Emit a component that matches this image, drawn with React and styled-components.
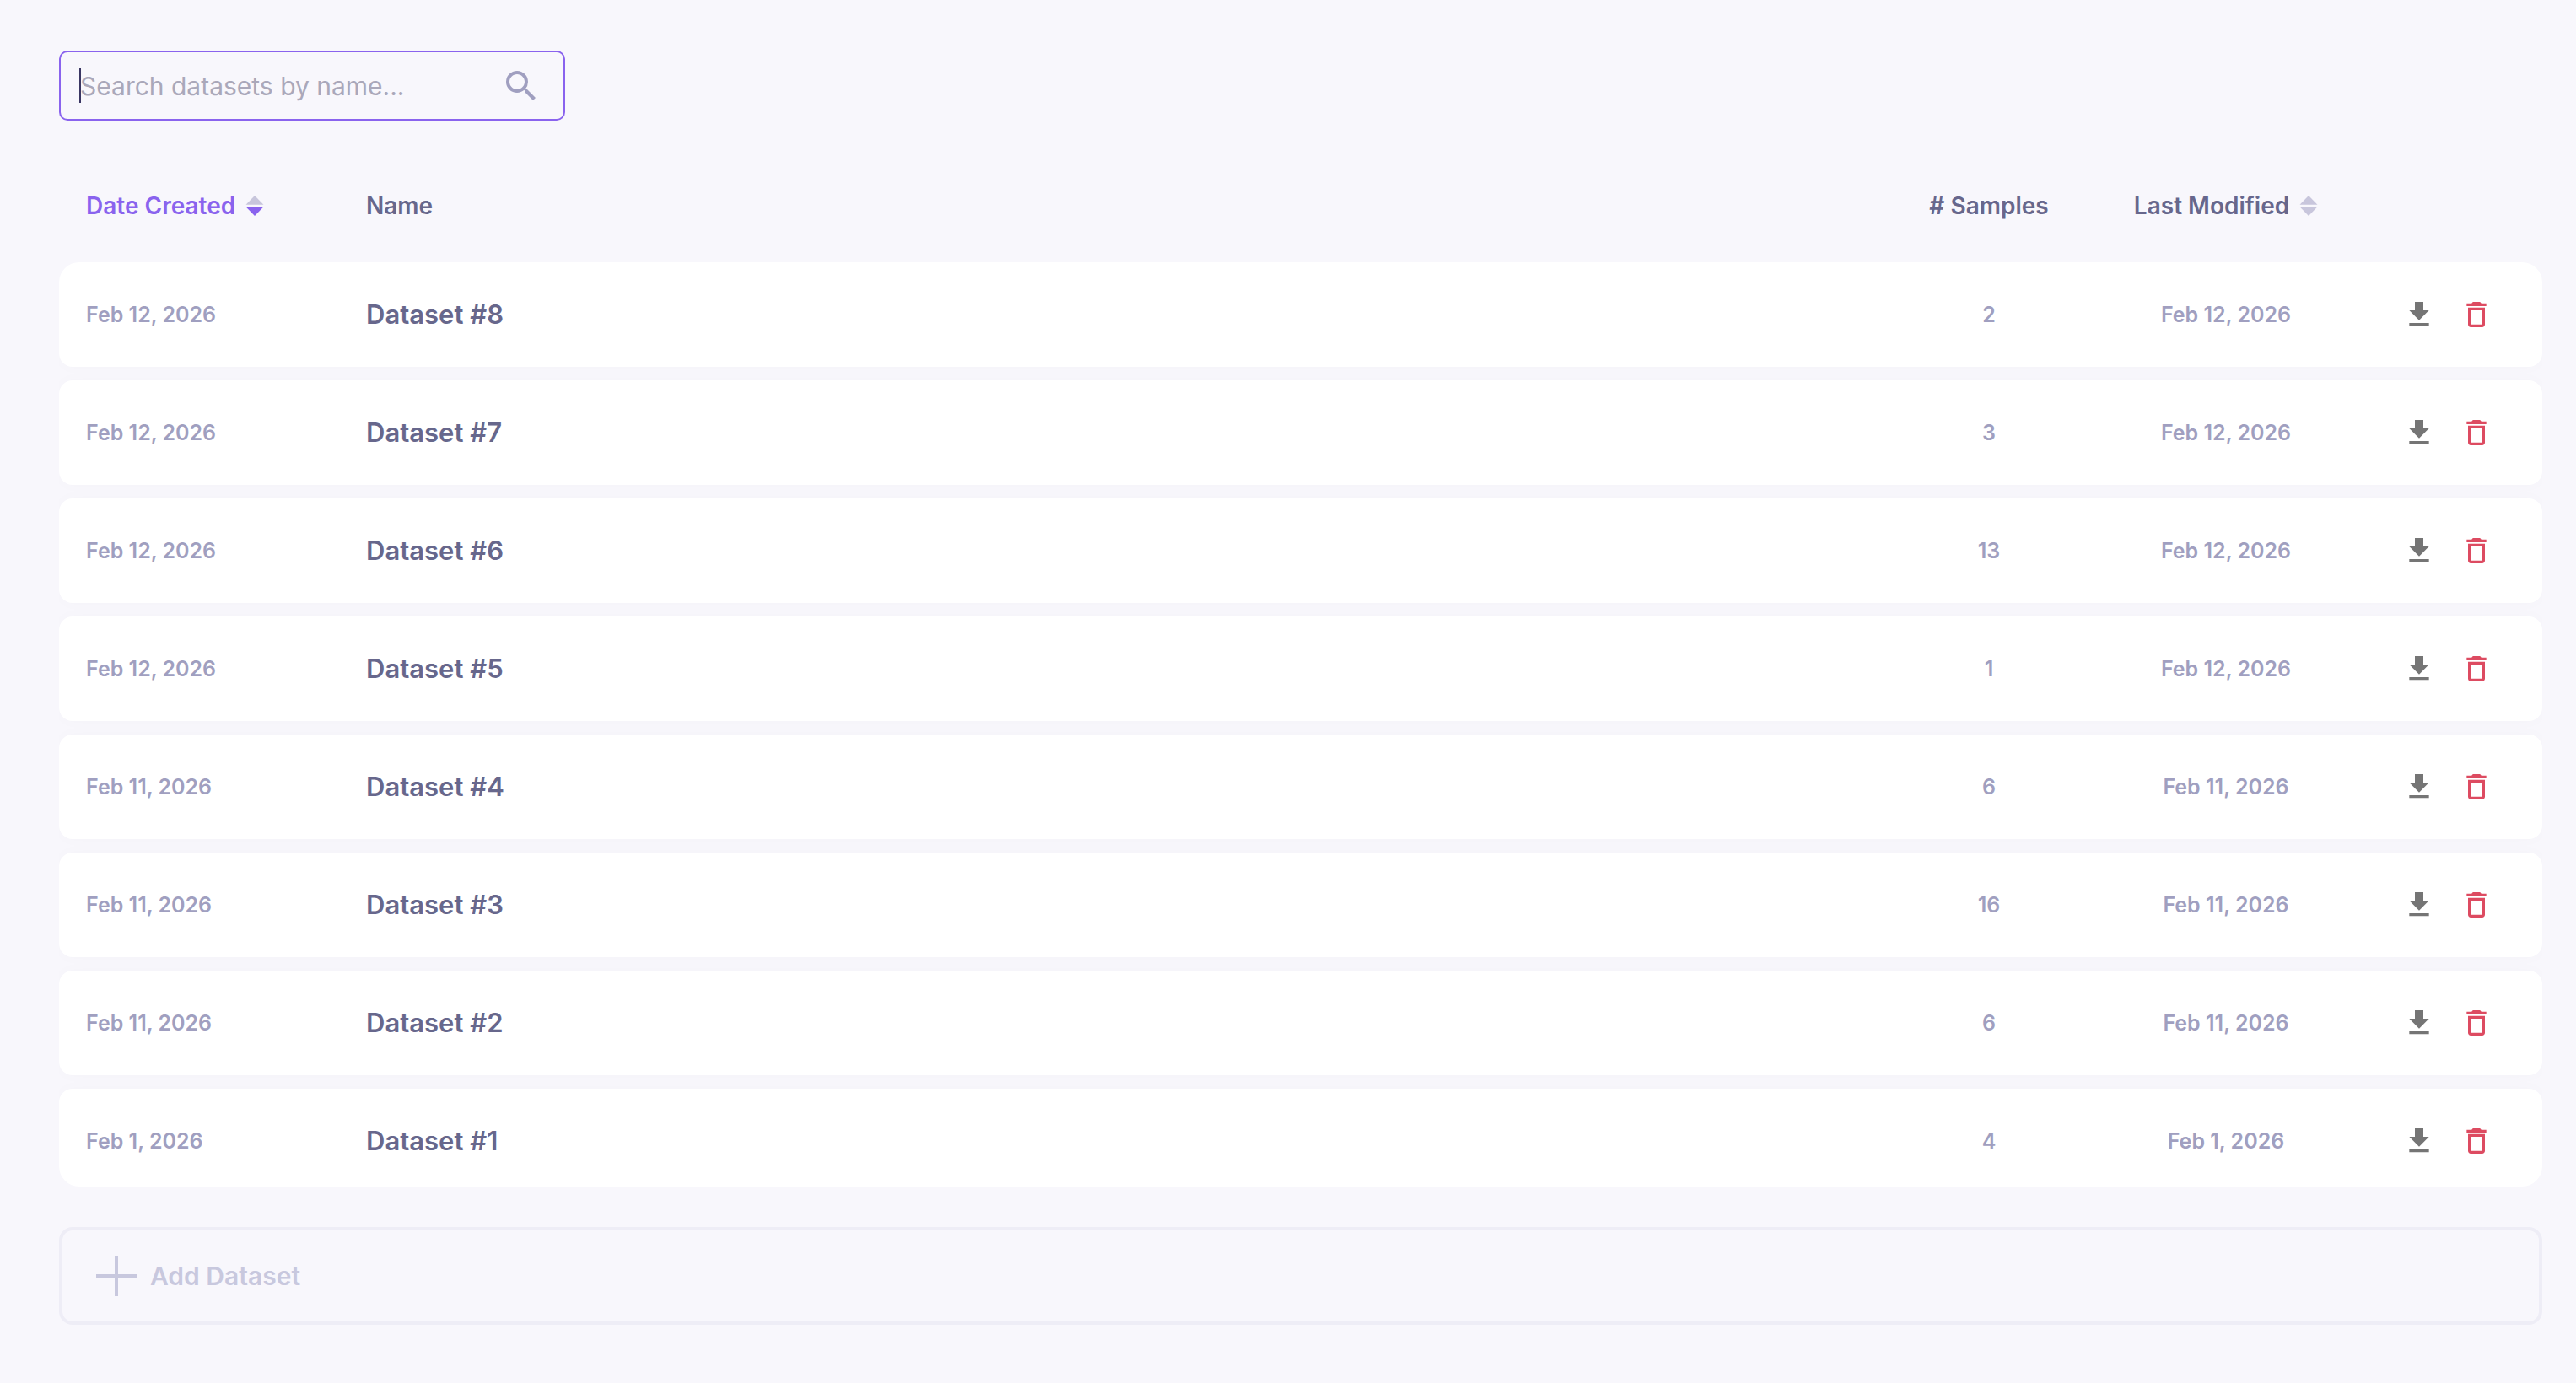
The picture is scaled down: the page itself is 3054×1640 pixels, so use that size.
import React, { useState } from 'react';
import styled, { createGlobalStyle } from 'styled-components';
import { MdSearch, MdDeleteOutline } from 'react-icons/md';

const GlobalStyle = createGlobalStyle`
  * {
    box-sizing: border-box;
  }

  body {
    margin: 0;
    background-color: #f8f7fc;
    font-family: Inter, 'Open Sans', sans-serif;
    color: #67678c;
  }
`;

const Page = styled.main`
  padding: 60px 40px 68px 70px;
`;

const SearchBox = styled.div`
  position: relative;
  display: flex;
  align-items: center;
  width: 600px;
  height: 83px;
  padding: 0 26px 0 23px;
  border: 2px solid #8a63ee;
  border-radius: 10px;
`;

const SearchInput = styled.input`
  flex: 1;
  min-width: 0;
  padding: 0;
  border: none;
  outline: none;
  background: transparent;
  color: #3a3663;
  font-family: inherit;
  font-size: 30px;
  line-height: 40px;
  caret-color: transparent;

  &::placeholder {
    color: #aaa8ba;
    opacity: 1;
  }
`;

const Caret = styled.span`
  position: absolute;
  left: 22px;
  top: 19px;
  width: 2px;
  height: 41px;
  background-color: #3a3663;
`;

const SearchIcon = styled(MdSearch)`
  flex: none;
  width: 48px;
  height: 48px;
  color: #a09fc0;
`;

const Table = styled.table`
  display: block;
  margin-top: 34px;
`;

const TableHead = styled.thead`
  display: block;
`;

const TableBody = styled.tbody`
  display: block;
  overflow: hidden;
  border-radius: 24px;
`;

const Row = styled.tr`
  display: grid;
  grid-template-columns: 332px 1fr 250px 312px 187px;
  align-items: center;
  padding: 0 32px;
`;

const HeadRow = styled(Row)`
  height: 134px;
`;

const DatasetRow = styled(Row)`
  height: 124px;
  margin-bottom: 16px;
  border-radius: 16px;
  background-color: #fff;
  box-shadow: 0 0 20px rgba(80, 70, 120, 0.02);

  &:last-child {
    margin-bottom: -8px;
  }
`;

const HeadCell = styled.th`
  display: flex;
  justify-content: ${({ $center }) => ($center ? 'center' : 'flex-start')};
  padding: 0;
  font-size: 28px;
  font-weight: 600;
  line-height: 40px;
  white-space: nowrap;
`;

const SortButton = styled.button`
  display: flex;
  align-items: center;
  gap: 12px;
  padding: 0;
  border: none;
  background: none;
  color: ${({ $active }) => ($active ? '#8a63ee' : 'inherit')};
  font: inherit;
  cursor: pointer;
`;

const Cell = styled.td`
  padding: 0;
  color: #a09fc0;
  font-size: 25px;
  font-weight: 600;
  line-height: 40px;
  text-align: ${({ $center }) => ($center ? 'center' : 'left')};
`;

const NameCell = styled(Cell)`
  color: #67678c;
  font-size: 31px;
`;

const ActionsCell = styled.td`
  display: flex;
  justify-content: flex-end;
  gap: 28px;
  padding: 0 26px 0 0;
`;

const IconButton = styled.button`
  display: flex;
  padding: 0;
  border: none;
  background: none;
  color: ${({ $danger }) => ($danger ? '#dd4b61' : '#757575')};
  cursor: pointer;

  svg {
    width: 40px;
    height: 40px;
  }
`;

const AddButton = styled.button`
  display: flex;
  align-items: center;
  gap: 16px;
  width: 100%;
  height: 116px;
  margin-top: 48px;
  padding: 0 40px;
  border: 4px solid #eeedf6;
  border-radius: 16px;
  background: none;
  color: #c8c8de;
  font-family: inherit;
  font-size: 30px;
  font-weight: 600;
  line-height: 40px;
  cursor: pointer;
`;

const datasets = [
  { id: 8, created: 'Feb 12, 2026', samples: 2, modified: 'Feb 12, 2026' },
  { id: 7, created: 'Feb 12, 2026', samples: 3, modified: 'Feb 12, 2026' },
  { id: 6, created: 'Feb 12, 2026', samples: 13, modified: 'Feb 12, 2026' },
  { id: 5, created: 'Feb 12, 2026', samples: 1, modified: 'Feb 12, 2026' },
  { id: 4, created: 'Feb 11, 2026', samples: 6, modified: 'Feb 11, 2026' },
  { id: 3, created: 'Feb 11, 2026', samples: 16, modified: 'Feb 11, 2026' },
  { id: 2, created: 'Feb 11, 2026', samples: 6, modified: 'Feb 11, 2026' },
  { id: 1, created: 'Feb 1, 2026', samples: 4, modified: 'Feb 1, 2026' },
];

const SortArrows = ({ descending }) => (
  <svg width="22" height="24" viewBox="0 0 22 24" aria-hidden="true">
    <path d="M11 0l10.5 10.8H0.5z" fill="#c8c6dc" />
    <path d="M11 24L0.5 13.2h21z" fill={descending ? '#8a63ee' : '#c8c6dc'} />
  </svg>
);

const DownloadIcon = () => (
  <svg viewBox="0 0 24 24" fill="currentColor" aria-hidden="true">
    <path d="M19 9h-4V3H9v6H5l7 7 7-7zM5 18v2h14v-2H5z" />
  </svg>
);

const PlusIcon = () => (
  <svg width="48" height="48" viewBox="0 0 48 48" aria-hidden="true">
    <path d="M24 0v48M0 24h48" stroke="currentColor" strokeWidth="4" />
  </svg>
);

const App = () => {
  const [query, setQuery] = useState('');

  const visible = datasets.filter(({ id }) =>
    `dataset #${id}`.includes(query.toLowerCase())
  );

  return (
    <>
      <GlobalStyle />
      <Page>
        <SearchBox>
          <SearchInput
            type="text"
            aria-label="Search datasets"
            placeholder="Search datasets by name..."
            value={query}
            onChange={(e) => setQuery(e.target.value)}
          />
          {!query && <Caret />}
          <SearchIcon />
        </SearchBox>

        <Table>
          <TableHead>
            <HeadRow>
              <HeadCell>
                <SortButton $active>
                  Date Created
                  <SortArrows descending />
                </SortButton>
              </HeadCell>
              <HeadCell>Name</HeadCell>
              <HeadCell $center># Samples</HeadCell>
              <HeadCell $center>
                <SortButton>
                  Last Modified
                  <SortArrows />
                </SortButton>
              </HeadCell>
            </HeadRow>
          </TableHead>
          <TableBody>
            {visible.map(({ id, created, samples, modified }) => (
              <DatasetRow key={id}>
                <Cell>{created}</Cell>
                <NameCell>Dataset #{id}</NameCell>
                <Cell $center>{samples}</Cell>
                <Cell $center>{modified}</Cell>
                <ActionsCell>
                  <IconButton aria-label={`Download dataset ${id}`}>
                    <DownloadIcon />
                  </IconButton>
                  <IconButton $danger aria-label={`Delete dataset ${id}`}>
                    <MdDeleteOutline />
                  </IconButton>
                </ActionsCell>
              </DatasetRow>
            ))}
          </TableBody>
        </Table>

        <AddButton>
          <PlusIcon />
          Add Dataset
        </AddButton>
      </Page>
    </>
  );
};

export default App;
